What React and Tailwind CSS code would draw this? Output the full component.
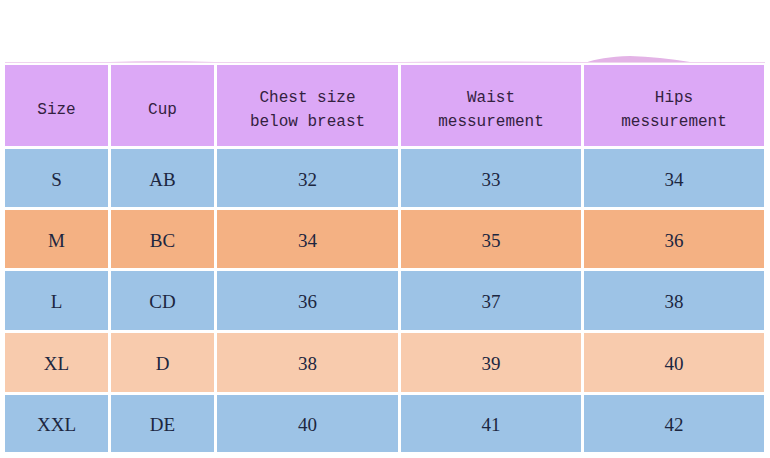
const header = [
  ['Size'],
  ['Cup'],
  ['Chest size', 'below breast'],
  ['Waist', 'messurement'],
  ['Hips', 'messurement'],
];

const rows = [
  { cells: ['S', 'AB', '32', '33', '34'], bg: 'bg-[#9dc3e6]', h: 'h-[58px]' },
  { cells: ['M', 'BC', '34', '35', '36'], bg: 'bg-[#f4b183]', h: 'h-[58px]' },
  { cells: ['L', 'CD', '36', '37', '38'], bg: 'bg-[#9dc3e6]', h: 'h-[59px]' },
  { cells: ['XL', 'D', '38', '39', '40'], bg: 'bg-[#f8cbad]', h: 'h-[59px]' },
  { cells: ['XXL', 'DE', '40', '41', '42'], bg: 'bg-[#9dc3e6]', h: 'h-[57px]' },
];

const App = () => {
  return (
    <div className="w-[770px] h-[458px] bg-white overflow-hidden">
      {/* faint wave above the header */}
      <div className="h-[65px]">
        <svg width="770" height="65" viewBox="0 0 770 65">
          <path d="M5 63 L110 62 Q160 60 215 62 L400 62 Q430 61 585 62 Z" fill="#ecc6ec" />
          <path d="M585 63 Q600 57 630 56 Q660 57 690 62 L765 62 L765 63 Z" fill="#e3b3e6" />
          <line x1="5" y1="62.5" x2="765" y2="62.5" stroke="#efd3ef" strokeWidth="1" />
        </svg>
      </div>

      <div className="ml-[5px] flex flex-col gap-[3px]">
        {/* header row */}
        <div className="flex gap-[3px] h-[81px]">
          {header.map((lines, i) => (
            <div
              key={i}
              className={`${i < 2 ? 'w-[103px]' : i === 2 ? 'w-[181px]' : 'w-[180px]'} bg-[#dca8f6] flex flex-col items-center justify-center pt-[9px] text-[16px] leading-[24px] text-[#33213f] font-['Liberation_Mono',monospace]`}
            >
              {lines.map((l) => (
                <span key={l} className="whitespace-pre">{l}</span>
              ))}
            </div>
          ))}
        </div>

        {/* body rows */}
        {rows.map((r) => (
          <div key={r.cells[0]} className={`flex gap-[3px] ${r.h}`}>
            {r.cells.map((c, i) => (
              <div
                key={i}
                className={`${i < 2 ? 'w-[103px]' : i === 2 ? 'w-[181px]' : 'w-[180px]'} ${r.bg} flex items-center justify-center pt-[4px] text-[19px] text-[#1c2640] font-['Liberation_Serif',serif]`}
              >
                {c}
              </div>
            ))}
          </div>
        ))}
      </div>
    </div>
  );
};

export default App;
